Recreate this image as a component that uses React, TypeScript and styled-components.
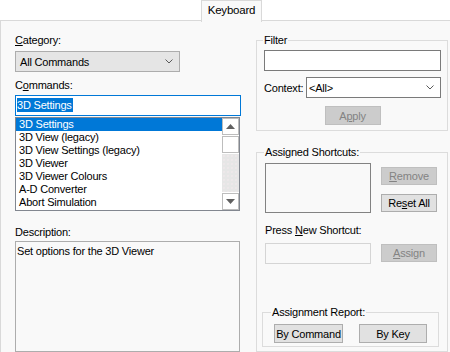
import React from 'react';
import styled, { createGlobalStyle } from 'styled-components';

const GlobalStyle = createGlobalStyle`
    body {
        margin: 0;
        background: #ffffff;
        font-family: "Liberation Sans", Arial, sans-serif;
        font-size: 11px;
        letter-spacing: -0.2px;
        color: #000000;
    }
`;

const Window = styled.div`
    width: 450px;
    height: 352px;
    overflow: hidden;
    background: #ffffff;
`;

const TabStrip = styled.div`
    height: 21px;
    padding-left: 201px;
    display: flex;
`;

const Tab = styled.div`
    position: relative;
    z-index: 1;
    width: 59px;
    height: 21px;
    border: 1px solid #d9d9d9;
    border-bottom: none;
    background: #f9f9f9;
    text-align: center;
    line-height: 19px;
    font-size: 11.5px;
`;

const Panel = styled.div`
    margin-top: -1px;
    height: 331px;
    border-top: 1px solid #d9d9d9;
    border-left: 1px solid #d9d9d9;
    background: #f9f9f9;
    padding-left: 14px;
    display: grid;
    grid-template-columns: 225px 192px;
    column-gap: 16px;
    align-items: start;
`;

const Column = styled.div<{ top: number }>`
    display: flex;
    flex-direction: column;
    padding-top: ${p => p.top}px;
`;

const Label = styled.div<{ gap?: number }>`
    height: 13px;
    line-height: 13px;
    margin-top: ${p => p.gap ?? 0}px;
    white-space: nowrap;
`;

const Combo = styled.div<{ width: number; flat?: boolean; gap?: number }>`
    box-sizing: border-box;
    width: ${p => p.width}px;
    height: 21px;
    margin-top: ${p => p.gap ?? 0}px;
    border: 1px solid ${p => p.flat ? '#7a7a7a' : '#adadad'};
    background: ${p => p.flat ? '#ffffff' : '#e5e5e5'};
    display: flex;
    align-items: center;
    justify-content: space-between;
    padding: 0 6px 0 ${p => p.flat ? 2 : 4}px;
`;

const TextBox = styled.div<{ width: number; height: number; gap?: number; tone?: 'focus' | 'dark' | 'light' }>`
    box-sizing: border-box;
    width: ${p => p.width}px;
    height: ${p => p.height}px;
    margin-top: ${p => p.gap ?? 0}px;
    border: 1px solid ${p => p.tone === 'focus' ? '#0078d7' : p.tone === 'dark' ? '#7a7a7a' : p.tone === 'light' ? '#d5d5d5' : '#adadad'};
    background: ${p => p.tone === 'focus' || p.tone === 'dark' ? '#ffffff' : '#f9f9f9'};
    padding: 2px 1px;
    line-height: 14px;
`;

const Selected = styled.span`
    display: inline-block;
    background: #0078d7;
    color: #ffffff;
    line-height: 14px;
    padding-right: 1px;
`;

const ListBox = styled.div`
    box-sizing: border-box;
    width: 225px;
    height: 94px;
    margin-top: 1px;
    border: 1px solid #828790;
    background: #ffffff;
    display: grid;
    grid-template-columns: 1fr 17px;
`;

const Items = styled.div`
    display: flex;
    flex-direction: column;
`;

const Item = styled.div<{ active?: boolean }>`
    height: 13px;
    line-height: 13px;
    padding-left: 3px;
    white-space: nowrap;
    background: ${p => p.active ? '#0078d7' : 'transparent'};
    color: ${p => p.active ? '#ffffff' : '#000000'};
`;

const ScrollBar = styled.div`
    display: flex;
    flex-direction: column;
    gap: 1px;
    background: #ffffff;
`;

const ScrollButton = styled.div`
    box-sizing: border-box;
    height: 17px;
    border: 1px solid #bdbdbd;
    background: #ffffff;
    display: flex;
    align-items: center;
    justify-content: center;
`;

const Track = styled.div`
    flex: 1;
    background-color: #e6e6e6;
    background-image: radial-gradient(#f3e8ec 0.6px, transparent 0.8px);
    background-size: 4px 4px;
`;

const Group = styled.div<{ gap: number; height: number; width?: number }>`
    position: relative;
    box-sizing: border-box;
    width: ${p => p.width ?? 192}px;
    height: ${p => p.height}px;
    margin-top: ${p => p.gap}px;
    border: 1px solid #dcdcdc;
`;

const Caption = styled.div<{ inset: number }>`
    position: absolute;
    top: -7px;
    left: ${p => p.inset}px;
    height: 13px;
    line-height: 13px;
    padding: 0 1px;
    background: #f9f9f9;
    white-space: nowrap;
`;

const GroupBody = styled.div<{ pad: string }>`
    padding: ${p => p.pad};
    display: flex;
    flex-direction: column;
`;

const Row = styled.div<{ gap?: number; align?: string }>`
    display: flex;
    align-items: ${p => p.align ?? 'center'};
    justify-content: space-between;
    margin-top: ${p => p.gap ?? 0}px;
`;

const Buttons = styled.div<{ spacing: number }>`
    display: flex;
    flex-direction: column;
    gap: ${p => p.spacing}px;
    margin-right: 2px;
`;

const Button = styled.div<{ width?: number; height?: number; disabled?: boolean; gap?: number }>`
    box-sizing: border-box;
    width: ${p => p.width ?? 56}px;
    height: ${p => p.height ?? 18}px;
    margin-top: ${p => p.gap ?? 0}px;
    border: 1px solid ${p => p.disabled ? '#bfbfbf' : '#adadad'};
    background: ${p => p.disabled ? '#cccccc' : '#e1e1e1'};
    color: ${p => p.disabled ? '#838383' : '#000000'};
    display: flex;
    align-items: center;
    justify-content: center;
    white-space: nowrap;
`;

const ReportRow = styled.div`
    display: flex;
    gap: 16px;
`;

const Chevron = () => (
    <svg width="8" height="5" viewBox="0 0 8 5">
        <path d="M0.5 0.5 L4 4 L7.5 0.5" fill="none" stroke="#5a5a5a" strokeWidth="1" />
    </svg>
);

const Arrow: React.FC<{ up?: boolean }> = ({ up }) => (
    <svg width="9" height="5" viewBox="0 0 9 5">
        <path d={up ? 'M0 5 L4.5 0 L9 5 Z' : 'M0 0 L4.5 5 L9 0 Z'} fill="#606060" />
    </svg>
);

const commands = [
    '3D Settings',
    '3D View (legacy)',
    '3D View Settings (legacy)',
    '3D Viewer',
    '3D Viewer Colours',
    'A-D Converter',
    'Abort Simulation',
];

const App: React.FC = () => {
    return (
        <Window>
            <GlobalStyle />
            <TabStrip>
                <Tab>Keyboard</Tab>
            </TabStrip>
            <Panel>
                <Column top={13}>
                    <Label><u>C</u>ategory:</Label>
                    <Combo width={165} gap={4}>
                        <span>All Commands</span>
                        <Chevron />
                    </Combo>
                    <Label gap={7}>C<u>o</u>mmands:</Label>
                    <TextBox width={226} height={21} gap={3} tone="focus">
                        <Selected>3D Settings</Selected>
                    </TextBox>
                    <ListBox>
                        <Items>
                            {commands.map((c, i) => (
                                <Item key={c} active={i === 0}>{c}</Item>
                            ))}
                        </Items>
                        <ScrollBar>
                            <ScrollButton><Arrow up /></ScrollButton>
                            <ScrollButton />
                            <Track />
                            <ScrollButton><Arrow /></ScrollButton>
                        </ScrollBar>
                    </ListBox>
                    <Label gap={15}>Description:</Label>
                    <TextBox width={225} height={111} gap={2}>
                        Set options for the 3D Viewer
                    </TextBox>
                </Column>
                <Column top={19}>
                    <Group gap={0} height={91}>
                        <Caption inset={6}>Filter</Caption>
                        <GroupBody pad="9px 6px 0 7px">
                            <TextBox width={177} height={21} tone="dark" />
                            <Row gap={6}>
                                <span>Context:</span>
                                <Combo width={135} flat>
                                    <span>&lt;All&gt;</span>
                                    <Chevron />
                                </Combo>
                            </Row>
                            <Row gap={8} style={{ justifyContent: 'center' }}>
                                <Button disabled height={19}>A<u>p</u>ply</Button>
                            </Row>
                        </GroupBody>
                    </Group>
                    <Group gap={21} height={200}>
                        <Caption inset={7}>Assigned Shortcuts:</Caption>
                        <GroupBody pad="10px 8px 0 8px">
                            <Row align="flex-start">
                                <TextBox width={106} height={50} tone="dark" style={{ borderColor: '#828282', background: 'transparent' }} />
                                <Buttons spacing={9}>
                                    <Button disabled gap={4}><u>R</u>emove</Button>
                                    <Button>Re<u>s</u>et All</Button>
                                </Buttons>
                            </Row>
                            <Label gap={11}>Press <u>N</u>ew Shortcut:</Label>
                            <Row gap={6} align="flex-start">
                                <TextBox width={106} height={21} tone="light" />
                                <Buttons spacing={0}>
                                    <Button disabled gap={1}><u>A</u>ssign</Button>
                                </Buttons>
                            </Row>
                            <Group gap={48} height={35} width={177} style={{ marginLeft: -3 }}>
                                <Caption inset={8}>Assignment Report:</Caption>
                                <GroupBody pad="11px 0 0 11px">
                                    <ReportRow>
                                        <Button width={69} height={19}>By Command</Button>
                                        <Button width={68} height={19}>By Key</Button>
                                    </ReportRow>
                                </GroupBody>
                            </Group>
                        </GroupBody>
                    </Group>
                </Column>
            </Panel>
        </Window>
    );
};

export default App;
